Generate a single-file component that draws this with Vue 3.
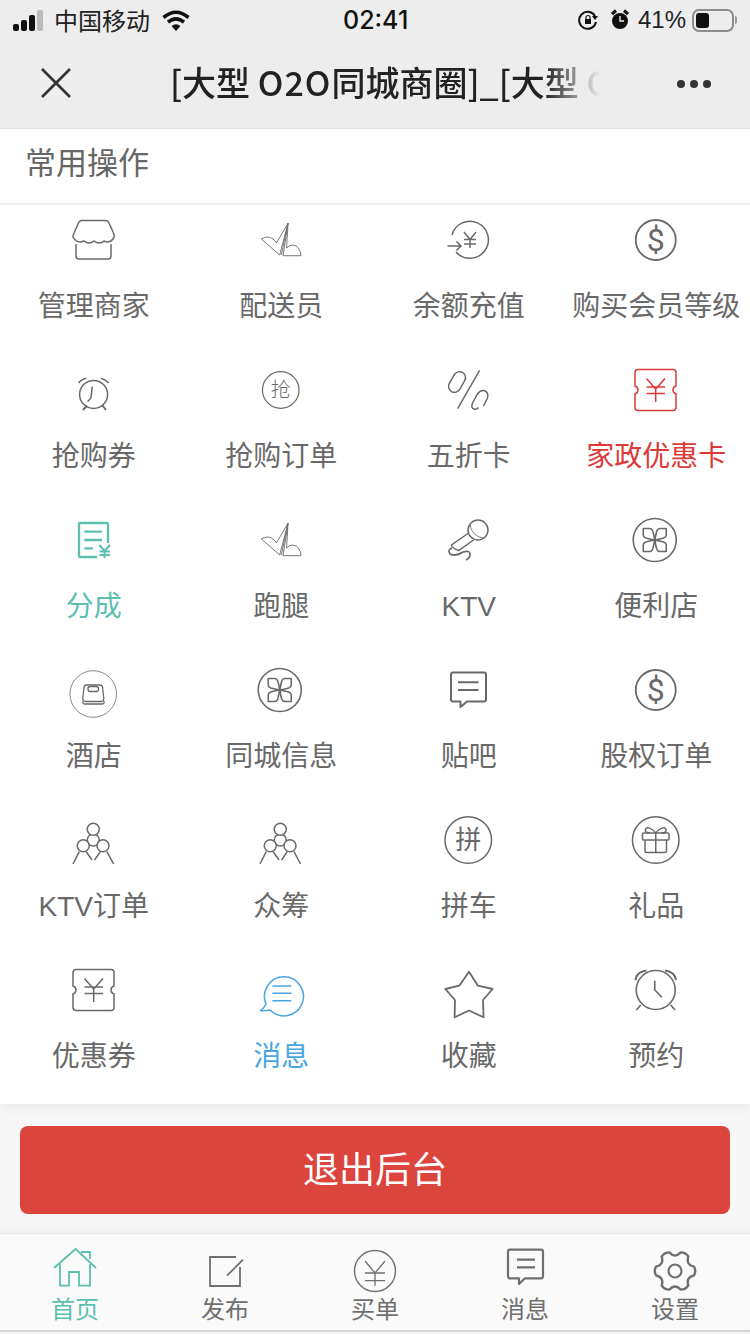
<script setup>
const couponPath = 'M12 9.5H47Q50 9.5 50 12.5V26Q47 27 47 30T50 34V47.5Q50 50.5 47 50.5H12Q9 50.5 9 47.5V34Q12 33 12 30T9 26V12.5Q9 9.5 12 9.5Z'
const yen = 'M20.5 18.5L29.7 29L39 18.5M20.5 27H39M20.5 33.5H39M29.7 27V42'
const petal = 'M0 0Q-1 -6 -2 -9Q-3 -11.5 -5 -11.5L-11.5 -11.5L-11.5 -5Q-11.5 -3 -9 -2Q-5 -1 0 0Z'
const flower = [0, 90, 180, 270]
  .map(a => `<path transform="translate(28.75 30) rotate(${a})" d="${petal}" stroke-width="1.6" stroke-linejoin="round"/>`)
  .join('')
const dollarSign = `<text x="29.75" y="41" text-anchor="middle" font-size="32" font-weight="400" fill="currentColor" stroke="none" font-family="Roboto,'Liberation Sans',sans-serif">$</text>`

const icons = {
  shop: '<path stroke-width="1.5" d="M9 27Q9 25 10 23L14.5 13Q15.5 10.5 18 10.5H41Q44 10.5 45 13L49.5 23Q50.5 25 50 27Q47 34 40 31Q35 35 30 31Q25 35 20 31Q13 34 9 27ZM12 34V46Q12 49 15 49H44Q47 49 47 46V34"/>',
  leaf: '<g stroke-width="0.9" stroke-linejoin="round"><path d="M10.4 29Q17 25 22 29Q25 31 25.4 33L37 13.3L28.7 45Z"/><path d="M37 13.3L32 45.7H50Q49 36 42 35Q38 35 35.6 38L37 13.3"/><path d="M37 13.3L30.3 45"/></g>',
  refill: '<g stroke-width="1.5"><path d="M13 25A18.5 18.5 0 1 1 17 42"/><path d="M8.5 36H22M17.5 31.5L22 36L17.5 40.5"/><path d="M25 22L31 29.5L37 22M25 29.5H37M25 34H37M31 29.5V38"/></g>',
  dollar: `<circle cx="29.75" cy="30" r="20" stroke-width="1.8"/>${dollarSign}`,
  clock: '<g stroke-width="1.5"><circle cx="29.6" cy="34.4" r="14"/><path d="M14.6 23Q17 19.5 22.2 18.3M37 18.3Q42 19.5 44.6 23"/><path d="M28.2 26.7L27 38L23.6 41.6"/><path d="M19 50L23 45.5M38.5 45.5L42 50" stroke-width="2"/></g>',
  qiang: `<circle cx="29.75" cy="30" r="18.3" stroke-width="1.2"/><text x="29.75" y="37" text-anchor="middle" font-size="20" fill="currentColor" stroke="none" font-weight="300" font-family="'Noto Sans CJK SC',sans-serif">抢</text>`,
  percent: '<g stroke-width="1.5"><path d="M40.6 10.3L18.6 48.7"/><rect x="12" y="11" width="12" height="22" rx="6" transform="rotate(30 18 22)"/><path d="M44.5 46L48.5 38Q50 32 45 30.5Q41 30 38.5 34L33.5 43Q31.5 48 35 49Q37.5 50 39.5 47.5"/></g>',
  coupon: `<g stroke-width="1.5"><path d="${couponPath}"/><path d="${yen}"/></g>`,
  doc: '<g stroke-width="2.3"><path d="M33 47H16Q15 47 15 46V14Q15 13 16 13H43Q44 13 44 14V33" stroke-linejoin="round"/><path d="M20.3 21.7H38M20.3 30H38M20.3 38.3H29"/><path d="M35.5 35L40.5 41L46 35M35.5 41.5H46M35.5 45H46M40.5 41V48" stroke-width="2"/></g>',
  mic: '<g stroke-width="1.5"><circle cx="39" cy="20" r="10"/><path d="M29 23.5L12.5 35Q12 37 19.6 40.7L34.6 30"/><path d="M31 15Q33 26 44 28" stroke-width="0.8"/><path d="M13 38Q8 40 11 44Q16 47 24 42Q31 40 31 44Q31 48 27 50" stroke-width="1.7"/></g>',
  flower: `<circle cx="28.75" cy="30" r="21.5" stroke-width="1.6"/>${flower}`,
  hotel: '<circle cx="29.25" cy="34" r="23.3" stroke-width="0.8"/><g stroke-width="1.3"><path d="M22 25H36Q38 25 38.5 27L39.8 38Q40 41.5 37 41.5H22Q18.5 41.5 18.8 38L20 27Q20.5 25 22 25Z"/><rect x="24" y="26.5" width="10.5" height="5" rx="2.2"/><path d="M19 41V43Q19 44 21 44H38Q40 44 40 43V41"/></g>',
  chat: '<g stroke-width="2"><path d="M14 12.5H45Q47 12.5 47 14.5V39.5Q47 41.5 45 41.5H28L21.5 47V41.5H14Q12 41.5 12 39.5V14.5Q12 12.5 14 12.5Z" stroke-linejoin="round"/><path d="M19 22.3H39.5M19 30H39.5"/></g>',
  people: '<g stroke-width="1.5"><circle cx="29.25" cy="30" r="6"/><circle cx="29.25" cy="19.3" r="6" fill="#fff"/><circle cx="19.25" cy="35.7" r="6" fill="#fff"/><circle cx="39" cy="35.7" r="6" fill="#fff"/><path d="M15.25 41.7L9 54M22.25 41.7L28 50M36.25 41.7L30.6 50M42.9 41.7L49.6 54"/></g>',
  pin: `<circle cx="29.25" cy="30" r="23.3" stroke-width="1.5"/><text x="29.25" y="39" text-anchor="middle" font-size="26" fill="currentColor" stroke="none" font-family="'Noto Sans CJK SC',sans-serif">拼</text>`,
  gift: '<circle cx="29.75" cy="30" r="23.3" stroke-width="1.5"/><g stroke-width="1.5"><rect x="16.5" y="23" width="26.5" height="7" rx="1"/><path d="M19 30V41Q19 42.5 20.5 42.5H39Q40.5 42.5 40.5 41V30M29.75 23V42.5"/><path d="M29.75 23C24 16 18.5 17 19.5 21Q20 23 24 23M29.75 23C35.5 16 41 17 40 21Q39.5 23 35.5 23"/></g>',
  bubble: '<g stroke-width="1.5"><path d="M15 44A19.5 19.5 0 1 1 19 50Q14 51 9.5 50.7Q13 48.5 15 44Z" stroke-linejoin="round"/><path d="M21.4 26H40.4M21.4 33.3H40.4M21.4 40.7H40.4"/></g>',
  star: '<path stroke-width="1.8" stroke-linejoin="round" d="M30 11.7L38.9 25.7L53.6 29L44 40L44.6 57.3L30 50.5L15.6 57.3L16 40L6.3 29L20.3 25.7Z"/>',
  alarm: '<g stroke-width="1.6"><circle cx="29.75" cy="30" r="19.5"/><path d="M9.4 20Q10.5 12 20.4 10.5M39 10.5Q49 12 50 20" stroke-width="2"/><path d="M28.75 20.7V30L36 37.3"/><path d="M10.4 50L14.75 45M49 50L44.75 45"/></g>'
}

const rows = [
  [['管理商家', 'shop'], ['配送员', 'leaf'], ['余额充值', 'refill'], ['购买会员等级', 'dollar']],
  [['抢购券', 'clock'], ['抢购订单', 'qiang'], ['五折卡', 'percent'], ['家政优惠卡', 'coupon', 'red']],
  [['分成', 'doc', 'teal'], ['跑腿', 'leaf'], ['KTV', 'mic'], ['便利店', 'flower']],
  [['酒店', 'hotel'], ['同城信息', 'flower'], ['贴吧', 'chat'], ['股权订单', 'dollar']],
  [['KTV订单', 'people'], ['众筹', 'people'], ['拼车', 'pin'], ['礼品', 'gift']],
  [['优惠券', 'coupon'], ['消息', 'bubble', 'blue'], ['收藏', 'star'], ['预约', 'alarm']]
]
const cells = rows.flat().map(([label, icon, tone]) => ({ label, icon, tone: tone || '' }))

const gear = (() => {
  const pt = (r, a) => `${(30 + r * Math.cos(a)).toFixed(1)} ${(28 + r * Math.sin(a)).toFixed(1)}`
  const s = Math.PI / 180
  let d = ''
  for (let k = 0; k < 6; k++) {
    const a = k * 60 * s
    d += `${k ? 'L' : 'M'}${pt(19.5, a - 13 * s)}Q${pt(21.5, a)} ${pt(19.5, a + 13 * s)}Q${pt(12.5, a + 30 * s)} ${pt(19.5, a + 47 * s)}`
  }
  return d + 'Z'
})()
const tabs = [
  { label: '首页', icon: 'home', active: true },
  { label: '发布', icon: 'edit' },
  { label: '买单', icon: 'pay' },
  { label: '消息', icon: 'msg' },
  { label: '设置', icon: 'gear' }
]
const tabIcons = {
  home: '<path stroke-width="1.8" d="M9 25L30.6 6L51 25M15 21V42.7H24V29H34V42.7H45V21M36 9H45V16"/>',
  edit: '<path stroke-width="1.8" d="M41 14H15V43H45V24M48 16.7L32 32.7"/>',
  pay: '<circle cx="30" cy="28" r="20.5" stroke-width="1.4"/><path stroke-width="1.3" d="M20 18L30 30L40 18M20 30H40M20 37.7H40M30 30V42.7"/>',
  msg: '<path stroke-width="2.2" stroke-linejoin="round" d="M15 6.7H46Q48 6.7 48 8.7V33.3Q48 35.3 46 35.3H30L24 41V35.3H15Q13 35.3 13 33.3V8.7Q13 6.7 15 6.7Z"/><path stroke-width="2.2" d="M22 16.7H40M22 24.3H40"/>',
  gear: `<path stroke-width="2.4" stroke-linejoin="round" d="${gear}"/><circle cx="30" cy="28" r="6.5" stroke-width="2.2"/>`
}
</script>

<template>
  <div class="page">
    <header class="top">
      <div class="status">
        <div class="status-left">
          <span class="signal"><i></i><i></i><i></i><i class="off"></i></span>
          <span class="carrier">中国移动</span>
          <svg class="wifi" width="28" height="21" viewBox="0 0 28 21">
            <path d="M14 21L9.5 16Q14 12.5 18.5 16Z" fill="#111" />
            <path d="M1.5 7.5Q14 -3 26.5 7.5M6 12.2Q14 5.5 22 12.2" fill="none" stroke="#111" stroke-width="3.6" />
          </svg>
        </div>
        <span class="time">02:41</span>
        <div class="status-right">
          <svg class="lock" width="20" height="20" viewBox="0 0 20 20" fill="none" stroke="#111">
            <path d="M17 6A8.5 8.5 0 1 0 18 12" stroke-width="2" />
            <path d="M14 6H20L17 10Z" fill="#111" stroke="none" />
            <rect x="7" y="9" width="6" height="5" fill="#111" stroke="none" />
            <path d="M8 9V7.5A2 2 0 0 1 12 7.5V9" stroke-width="1.2" />
          </svg>
          <svg class="tiny-alarm" width="20" height="22" viewBox="0 0 20 22">
            <circle cx="10" cy="12" r="8" fill="#111" />
            <path d="M2 5L6 1.5M18 5L14 1.5" stroke="#111" stroke-width="3" />
            <path d="M10 7V12H14" stroke="#eee" stroke-width="1.4" fill="none" />
          </svg>
          <span class="pct">41%</span>
          <span class="battery"><i></i></span>
          <span class="nub"></span>
        </div>
      </div>
      <nav class="nav">
        <svg class="close" width="30" height="30" viewBox="0 0 30 30">
          <path d="M1 1L29 29M29 1L1 29" stroke="#333" stroke-width="2.6" />
        </svg>
        <div class="title">[大型 <span class="o2o">O2O</span>同城商圈]_[大型 O</div>
        <div class="dots"><i></i><i></i><i></i></div>
      </nav>
    </header>

    <h2 class="section">常用操作</h2>

    <section class="grid">
      <a v-for="(c, i) in cells" :key="i" class="cell" :class="c.tone">
        <svg class="icon" width="60" height="60" viewBox="0 0 60 60" fill="none" stroke="currentColor" v-html="icons[c.icon]"></svg>
        <span class="label">{{ c.label }}</span>
      </a>
    </section>

    <button class="logout"><span>退出后台</span></button>

    <footer class="tabbar">
      <a v-for="t in tabs" :key="t.label" class="tab" :class="{ active: t.active }">
        <svg width="60" height="50" viewBox="0 0 60 50" fill="none" stroke="currentColor" v-html="tabIcons[t.icon]"></svg>
        <span class="tab-label">{{ t.label }}</span>
      </a>
    </footer>
  </div>
</template>

<style>
html, body { margin: 0; background: #f7f7f7; }
</style>

<style scoped>
.page {
  width: 750px;
  height: 1334px;
  display: flex;
  flex-direction: column;
  overflow: hidden;
  background: #f7f7f7;
  font-family: "Noto Sans CJK SC", sans-serif;
}
.top { height: 128px; background: #ededed; border-bottom: 1px solid #e2e2e2; flex: none; }
.status {
  height: 40px;
  display: flex;
  align-items: center;
  justify-content: space-between;
  position: relative;
  color: #111;
}
.status-left { display: flex; align-items: center; padding-left: 13px; }
.signal { display: flex; align-items: flex-end; gap: 2px; height: 21px; margin-right: 11px; }
.signal i { width: 6px; background: #111; border-radius: 2px; }
.signal i:nth-child(1) { height: 7px; }
.signal i:nth-child(2) { height: 11px; }
.signal i:nth-child(3) { height: 16px; }
.signal i:nth-child(4) { height: 21px; }
.signal i.off { background: #bbb; }
.carrier { font-size: 24px; line-height: 40px; color: #222; }
.wifi { margin-left: 12px; }
.time {
  position: absolute;
  left: 343px;
  font: 500 25px/40px "Inter", "Liberation Sans", sans-serif;
}
.status-right { display: flex; align-items: center; padding-right: 13px; }
.tiny-alarm { margin-left: 12px; }
.pct { margin-left: 8px; font: 400 24px/40px "Liberation Sans", sans-serif; color: #222; }
.battery {
  width: 42px;
  height: 23px;
  margin-left: 6px;
  box-sizing: border-box;
  border: 2px solid #8c8c8c;
  border-radius: 7px;
  padding: 2px;
  display: flex;
}
.battery i { width: 13px; background: #111; border-radius: 3px; }
.nub { width: 2px; height: 8px; margin-left: 1px; background: #999; border-radius: 0 2px 2px 0; }
.nav { height: 88px; display: flex; align-items: center; position: relative; }
.close { margin-left: 41px; margin-top: -2px; }
.title {
  position: absolute;
  left: 170px;
  width: 450px;
  top: 19px;
  font-size: 34px;
  font-weight: 500;
  line-height: 46px;
  color: #222;
  white-space: nowrap;
  -webkit-mask-image: linear-gradient(to right, #000 375px, transparent 430px);
  mask-image: linear-gradient(to right, #000 375px, transparent 430px);
}
.o2o { letter-spacing: 1px; }
.dots { margin-left: auto; margin-right: 39px; display: flex; gap: 5px; }
.dots i { width: 8px; height: 8px; border-radius: 50%; background: #333; }
.section {
  flex: none;
  margin: 0;
  height: 74px;
  padding-left: 25px;
  font-size: 31px;
  font-weight: 400;
  line-height: 64px;
  color: #666;
  background: #fff;
  border-bottom: 2px solid #f2f2f2;
}
.grid {
  flex: none;
  display: grid;
  grid-template-columns: repeat(4, 1fr);
  grid-auto-rows: 150px;
  background: #fff;
  box-shadow: 0 2px 12px rgba(0, 0, 0, 0.07);
  height: 899px;
}
.cell {
  display: flex;
  flex-direction: column;
  align-items: center;
  padding-top: 5px;
  color: #696969;
}
.icon { display: block; overflow: visible; }
.label {
  margin-top: 17px;
  font-size: 28px;
  line-height: 40px;
  white-space: nowrap;
  font-family: "Liberation Sans", "Noto Sans CJK SC", sans-serif;
}
.cell.red { color: #dc3a38; }
.cell.teal { color: #5bc0ae; }
.cell.blue { color: #4aa6e0; }
.logout {
  flex: none;
  margin: 22px 20px 0;
  height: 88px;
  border: 0;
  border-radius: 8px;
  background: #dc453d;
  color: #fff;
  font-family: "Noto Sans CJK SC", sans-serif;
  font-size: 36px;
  padding: 0 0 6px;
}
.tabbar {
  flex: none;
  margin-top: 19px;
  height: 99px;
  box-sizing: border-box;
  background: #fafafa;
  border-top: 1px solid #e8e8e8;
  border-bottom: 2px solid #d6d6d6;
  box-shadow: 0 -2px 6px rgba(0, 0, 0, 0.04);
  display: grid;
  grid-template-columns: repeat(5, 150px);
  padding-top: 9px;
}
.tab { display: flex; flex-direction: column; align-items: center; color: #6f6f6f; }
.tab.active { color: #5bc0ae; }
.tab-label { font-size: 24px; line-height: 30px; }
</style>
